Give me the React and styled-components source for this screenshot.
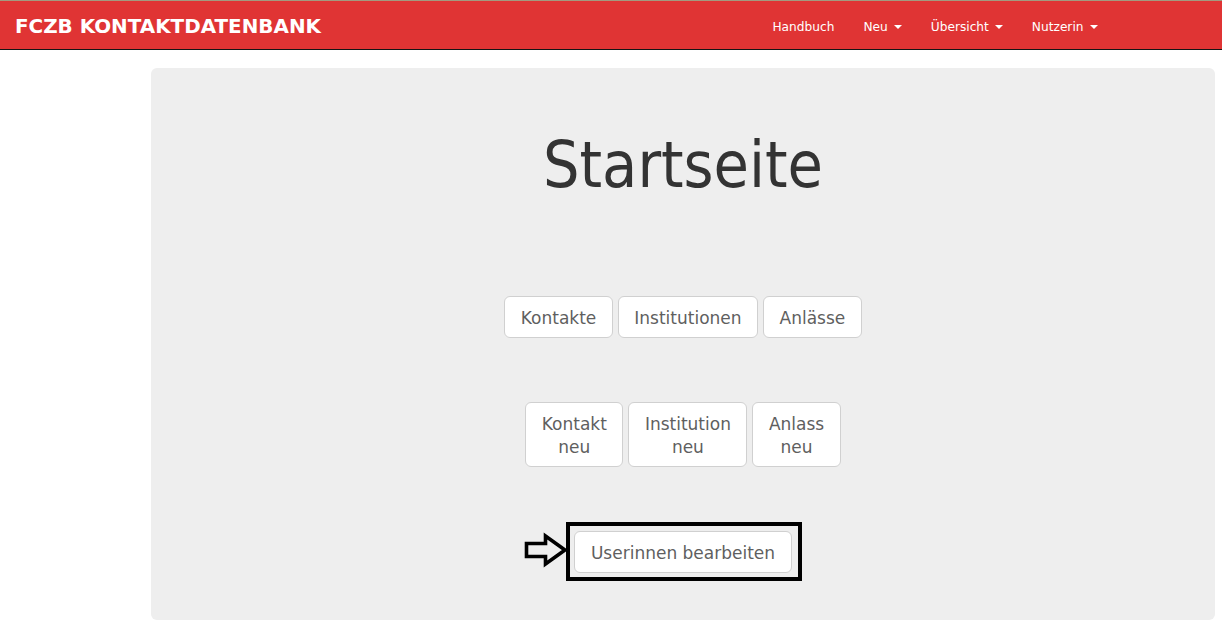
import React from "react";
import styled, { createGlobalStyle } from "styled-components";

const Global = createGlobalStyle`
  html, body { margin: 0; padding: 0; background: #fff; }
  body { font-family: "DejaVu Sans", Verdana, sans-serif; }
  * { box-sizing: border-box; }
`;

const Navbar = styled.header`
  display: flex;
  align-items: center;
  height: 50px;
  background: #e03434;
  border-top: 1px solid #a39a80;
  border-bottom: 1px solid #151515;
  padding: 3px 110px 0 15px;
`;

const Brand = styled.div`
  color: #fff;
  font-weight: bold;
  font-size: 19.9px;
  line-height: 24px;
`;

const NavList = styled.nav`
  display: flex;
  align-items: center;
  margin-left: auto;
`;

const NavItem = styled.a`
  display: flex;
  align-items: center;
  color: #fff;
  font-size: 12.2px;
  line-height: 16px;
  padding: 0 14.5px;
  text-decoration: none;
  white-space: nowrap;
`;

const Caret = styled.span`
  display: inline-block;
  width: 0;
  height: 0;
  margin-left: 6px;
  margin-top: 1px;
  border-top: 4px solid #fff;
  border-left: 4px solid transparent;
  border-right: 4px solid transparent;
`;

const Jumbotron = styled.main`
  margin: 18px 7px 0 151px;
  background: #eeeeee;
  border-radius: 6px;
  padding: 62px 0 47px;
  display: flex;
  flex-direction: column;
  align-items: center;
`;

const Title = styled.h1`
  margin: 0 0 96px;
  font-family: "DejaVu Sans Condensed", "DejaVu Sans", sans-serif;
  font-stretch: condensed;
  font-weight: normal;
  font-size: 64px;
  line-height: 70px;
  color: #333;
`;

const Row = styled.div`
  display: flex;
  justify-content: center;
  gap: 5px;
  margin-bottom: ${(p) => p.$mb || 0}px;
`;

const Button = styled.a`
  display: inline-block;
  background: #fff;
  border: 1px solid #d0d0d0;
  border-radius: 6px;
  color: #5f5f5f;
  font-size: 17px;
  line-height: 23px;
  padding: 10px 15.5px 7px;
  text-align: center;
  white-space: nowrap;
  text-decoration: none;
`;

const Highlight = styled.div`
  position: relative;
  display: inline-block;
  &::before {
    content: "";
    position: absolute;
    left: -8px;
    right: -10px;
    top: -9px;
    bottom: -8px;
    border: 4px solid #000;
  }
`;

const Arrow = styled.svg`
  position: absolute;
  left: -51px;
  top: 2px;
  width: 44px;
  height: 34px;
  overflow: visible;
`;

export default function App() {
  return (
    <>
      <Global />
      <Navbar>
        <Brand>FCZB KONTAKTDATENBANK</Brand>
        <NavList>
          <NavItem>Handbuch</NavItem>
          <NavItem>Neu<Caret /></NavItem>
          <NavItem>Übersicht<Caret /></NavItem>
          <NavItem>Nutzerin<Caret /></NavItem>
        </NavList>
      </Navbar>
      <Jumbotron>
        <Title>Startseite</Title>
        <Row $mb={64}>
          <Button>Kontakte</Button>
          <Button>Institutionen</Button>
          <Button>Anlässe</Button>
        </Row>
        <Row $mb={64}>
          <Button>Kontakt<br />neu</Button>
          <Button>Institution<br />neu</Button>
          <Button>Anlass<br />neu</Button>
        </Row>
        <Row>
          <Highlight>
            <Arrow viewBox="0 0 44 34">
              <path
                d="M3.5 10.5 H22.5 V3 L42 17 L22.5 31 V23.5 H3.5 Z"
                fill="none"
                stroke="#000"
                strokeWidth="3.6"
                strokeLinejoin="miter"
              />
            </Arrow>
            <Button>Userinnen bearbeiten</Button>
          </Highlight>
        </Row>
      </Jumbotron>
    </>
  );
}
